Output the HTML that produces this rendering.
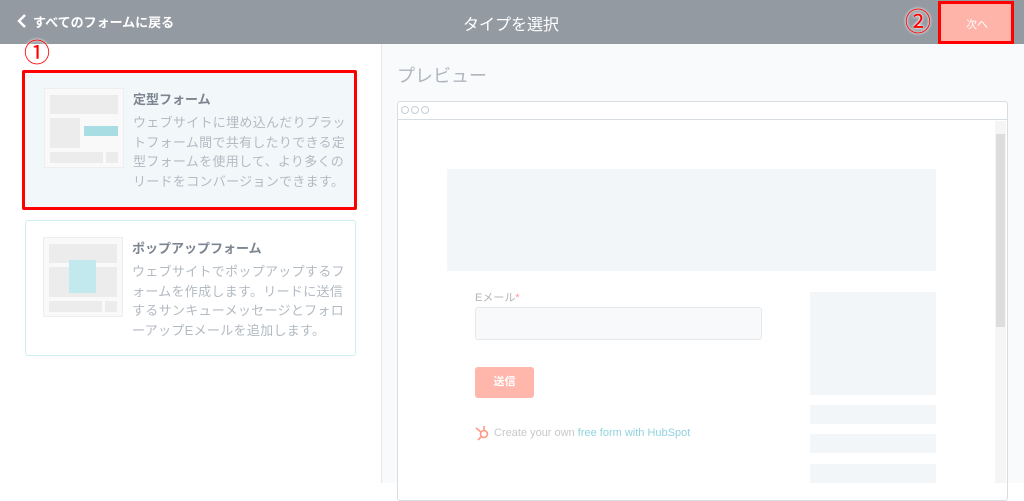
<!DOCTYPE html>
<html><head><meta charset="utf-8"><style>
*{margin:0;padding:0;box-sizing:border-box}
body{width:1024px;height:483px;overflow:hidden;font-family:"Liberation Sans","Noto Sans CJK JP",sans-serif;background:#fff;position:relative}
.a{position:absolute}
.hdr{left:0;top:0;width:1024px;height:44px;background:#949aa2}
.card .t{font-size:13px;font-weight:bold;color:#7c8590}
.card .d{font-size:13px;letter-spacing:0.3px;color:#b3bac2;line-height:19.5px}
.num{color:#f00;font-size:26px;text-shadow:0 0 2px #fff,0 0 3px #fff}
</style></head><body>
<div class="a hdr"></div>
<svg class="a" style="left:17px;top:14px" width="10" height="14"><path d="M8 1 L2 7 L8 13" stroke="#fff" stroke-width="2.4" fill="none"/></svg>
<div class="a" style="left:33px;top:12px;color:#fff;font-size:13px;font-weight:bold">すべてのフォームに戻る</div>
<div class="a" style="left:463px;top:11px;color:#fff;font-size:16px">タイプを選択</div>
<div class="a num" style="left:905px;top:2px">②</div>
<div class="a" style="left:938px;top:1px;width:76px;height:43px;border:3px solid #f00;background:#ffb4a9"></div>
<div class="a" style="left:966px;top:16px;color:#fff;font-size:11px">次へ</div>
<div class="a num" style="left:24px;top:33px">①</div>

<div class="a" style="left:381px;top:44px;width:643px;height:439px;background:#f9fafb;border-left:1px solid #e5e8eb"></div>
<div class="a" style="left:397px;top:62px;color:#b0b6be;font-size:18px">プレビュー</div>
<div class="a" style="left:397px;top:101px;width:611px;height:400px;background:#fff;border:1px solid #d8dde3;border-radius:3px"></div>
<div class="a" style="left:397px;top:119px;width:611px;height:1px;background:#d8dde3"></div>
<svg class="a" style="left:400px;top:105px" width="36" height="10"><g fill="none" stroke="#c8cdd3" stroke-width="1"><circle cx="5" cy="5" r="3.5"/><circle cx="15" cy="5" r="3.5"/><circle cx="25" cy="5" r="3.5"/></g></svg>
<div class="a" style="left:995px;top:121px;width:11px;height:362px;background:#f5f5f5"></div>
<div class="a" style="left:996px;top:134px;width:9px;height:193px;background:#ddd"></div>
<div class="a" style="left:447px;top:169px;width:489px;height:102px;background:#f3f6f9"></div>
<div class="a" style="left:475px;top:289px;color:#b5b5b5;font-size:11px">Eメール<span style="color:#f99">*</span></div>
<div class="a" style="left:475px;top:307px;width:287px;height:33px;background:#f8f9fb;border:1px solid #e6e9ec;border-radius:3px"></div>
<div class="a" style="left:475px;top:367px;width:59px;height:31px;background:#ffb6ab;border-radius:3px;color:#fff;font-size:11px;font-weight:bold;text-align:center;line-height:31px">送信</div>
<svg class="a" style="left:473px;top:423px" width="20" height="20"><g stroke="#ff9a85" stroke-width="1.6" fill="none"><circle cx="11" cy="11" r="3.5"/><path d="M11 7.5V3M8 9L3 5M8.5 13.5L5 17"/></g></svg>
<div class="a" style="left:494px;top:427px;font-size:11px;color:#c8c8c8">Create your own <span style="color:#8fd3e0">free form with HubSpot</span></div>
<div class="a" style="left:810px;top:292px;width:126px;height:103px;background:#f3f6f9"></div>
<div class="a" style="left:810px;top:405px;width:126px;height:19px;background:#f3f6f9"></div>
<div class="a" style="left:810px;top:434px;width:126px;height:19px;background:#f3f6f9"></div>
<div class="a" style="left:810px;top:464px;width:126px;height:19px;background:#f3f6f9"></div>

<div class="a card" style="left:22px;top:70px;width:335px;height:140px;border:3px solid #f00;border-radius:2px;background:#f2f8fa">
 <div class="a" style="left:19px;top:15px;width:80px;height:80px;background:#f9f9f9;border:1px solid #eee">
  <div class="a" style="left:5px;top:6px;width:68px;height:19px;background:#ececec"></div>
  <div class="a" style="left:5px;top:29px;width:30px;height:30px;background:#ececec"></div>
  <div class="a" style="left:39px;top:37px;width:34px;height:10px;background:#a9dde4"></div>
  <div class="a" style="left:5px;top:63px;width:53px;height:11px;background:#ececec"></div>
  <div class="a" style="left:61px;top:63px;width:12px;height:11px;background:#ececec"></div>
 </div>
 <div class="a t" style="left:108px;top:16px">定型フォーム</div>
 <div class="a d" style="left:108px;top:40px;width:218px">ウェブサイトに埋め込んだりプラットフォーム間で共有したりできる定型フォームを使用して、より多くのリードをコンバージョンできます。</div>
</div>
<div class="a card" style="left:25px;top:220px;width:331px;height:136px;border:1px solid #cdeef3;border-radius:3px;background:#fff">
 <div class="a" style="left:17px;top:16px;width:80px;height:80px;background:#f9f9f9;border:1px solid #eee">
  <div class="a" style="left:5px;top:6px;width:68px;height:19px;background:#ececec"></div>
  <div class="a" style="left:5px;top:29px;width:68px;height:30px;background:#ececec"></div>
  <div class="a" style="left:25px;top:22px;width:27px;height:33px;background:#c2e9ee"></div>
  <div class="a" style="left:5px;top:63px;width:53px;height:11px;background:#ececec"></div>
  <div class="a" style="left:61px;top:63px;width:12px;height:11px;background:#ececec"></div>
 </div>
 <div class="a t" style="left:106px;top:17px">ポップアップフォーム</div>
 <div class="a d" style="left:106px;top:41px;width:218px">ウェブサイトでポップアップするフォームを作成します。リードに送信するサンキューメッセージとフォローアップEメールを追加します。</div>
</div>
</body></html>
